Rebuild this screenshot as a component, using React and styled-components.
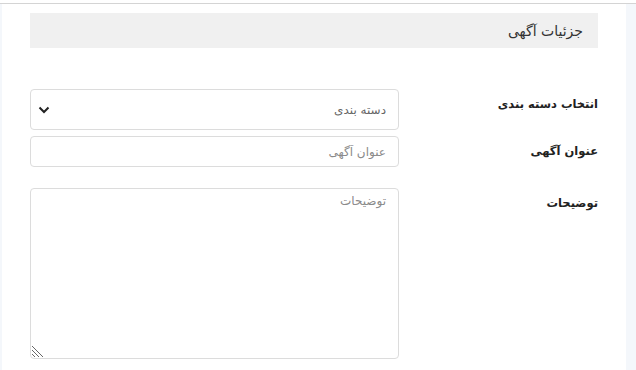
import React from "react";
import styled, { createGlobalStyle } from "styled-components";

const GlobalStyle = createGlobalStyle`
  html, body {
    margin: 0;
    padding: 0;
    background: #f4f7fb;
  }
  body {
    font-family: "DejaVu Sans", "Noto Sans", sans-serif;
  }
`;

const Page = styled.div`
  width: 636px;
  height: 370px;
  display: flex;
  flex-direction: column;
  background: #ffffff;
  overflow: hidden;
`;

const TopLine = styled.div`
  height: 3px;
  background: #ffffff;
  border-bottom: 1px solid #d4d4d4;
`;

const Body = styled.div`
  flex: 1;
  display: flex;
  background: #f4f7fb;
  padding: 0 10px 0 2px;
`;

const Content = styled.div`
  flex: 1;
  background: #ffffff;
  padding: 9px 28px 0 28px;
  direction: rtl;
`;

const Header = styled.div`
  height: 35px;
  background: #f0f0f0;
  display: flex;
  align-items: center;
  padding: 0 15px;
  font-size: 14px;
  color: #333;
`;

const Form = styled.div`
  margin-top: 41px;
  display: grid;
  grid-template-columns: 1fr 369px;
  row-gap: 6px;
`;

const Label = styled.label`
  font-size: 11.5px;
  font-weight: bold;
  color: #222;
  padding-top: ${(p) => p.$top}px;
`;

const Field = styled.div`
  position: relative;
  margin-top: ${(p) => p.$mt || 0}px;
`;

const baseInput = `
  box-sizing: border-box;
  width: 100%;
  border: 1px solid #dcdcdc;
  border-radius: 4px;
  background: #fff;
  font-family: "DejaVu Sans", "Noto Sans", sans-serif;
  font-size: 12px;
  color: #333;
  direction: rtl;
  outline: none;
  &::placeholder { color: #8a8a8a; }
`;

const Select = styled.select`
  ${baseInput}
  height: 41px;
  padding: 0 12px;
  appearance: none;
  color: #666;
`;

const Chevron = styled.svg`
  position: absolute;
  left: 8px;
  top: 17px;
  pointer-events: none;
`;

const Input = styled.input`
  ${baseInput}
  height: 31px;
  padding: 0 12px;
`;

const TextArea = styled.textarea`
  ${baseInput}
  display: block;
  height: 171px;
  padding: 5px 12px;
  resize: none;
`;

const Grip = styled.span`
  position: absolute;
  left: 2px;
  bottom: 2px;
  width: 14px;
  height: 14px;
  background: repeating-linear-gradient(
    45deg,
    transparent 0,
    transparent 1.6px,
    #666 1.6px,
    #666 2.8px
  );
  clip-path: polygon(0 0, 100% 100%, 0 100%);
  pointer-events: none;
`;

export default function App() {
  return (
    <>
      <GlobalStyle />
      <Page>
        <TopLine />
        <Body>
          <Content>
            <Header>جزئیات آگهی</Header>
            <Form>
              <Label $top={8}>انتخاب دسته بندی</Label>
              <Field>
                <Select defaultValue="">
                  <option value="">دسته بندی</option>
                </Select>
                <Chevron width="12" height="8" viewBox="0 0 12 8">
                  <path d="M1.5 1.5 L6 6 L10.5 1.5" fill="none" stroke="#222" strokeWidth="2" />
                </Chevron>
              </Field>
              <Label $top={8}>عنوان آگهی</Label>
              <Field>
                <Input placeholder="عنوان آگهی" />
              </Field>
              <Label $top={23}>توضیحات</Label>
              <Field $mt={15}>
                <TextArea placeholder="توضیحات" />
                <Grip />
              </Field>
            </Form>
          </Content>
        </Body>
      </Page>
    </>
  );
}
